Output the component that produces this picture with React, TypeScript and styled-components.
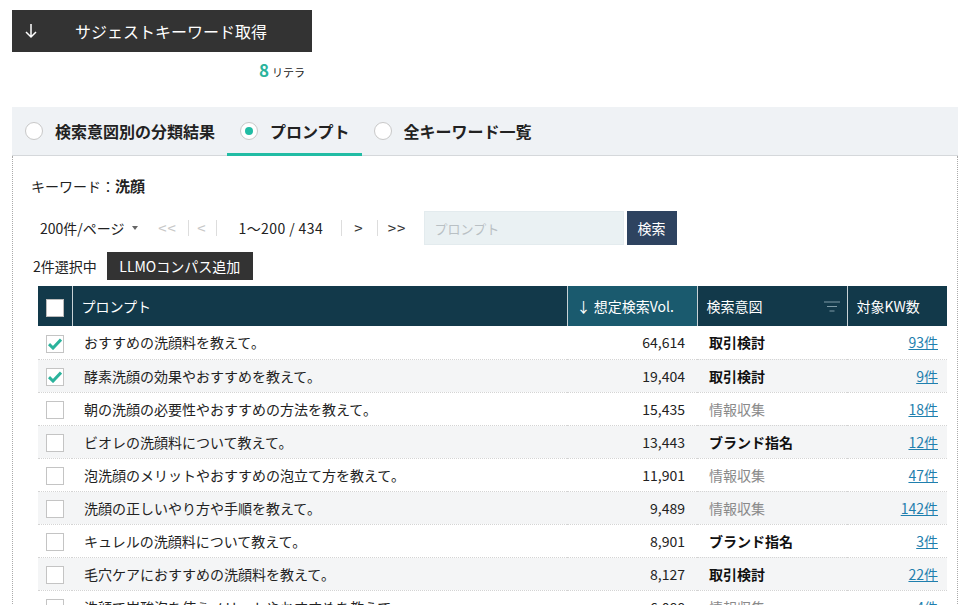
import React, { useState } from "react";
import styled, { createGlobalStyle } from "styled-components";

type Intent = "取引検討" | "情報収集" | "ブランド指名";

type Row = {
  prompt: string;
  vol: string;
  intent: Intent;
  count: string;
  checked?: boolean;
};

const rows: Row[] = [
  { prompt: "おすすめの洗顔料を教えて。", vol: "64,614", intent: "取引検討", count: "93件", checked: true },
  { prompt: "酵素洗顔の効果やおすすめを教えて。", vol: "19,404", intent: "取引検討", count: "9件", checked: true },
  { prompt: "朝の洗顔の必要性やおすすめの方法を教えて。", vol: "15,435", intent: "情報収集", count: "18件" },
  { prompt: "ビオレの洗顔料について教えて。", vol: "13,443", intent: "ブランド指名", count: "12件" },
  { prompt: "泡洗顔のメリットやおすすめの泡立て方を教えて。", vol: "11,901", intent: "情報収集", count: "47件" },
  { prompt: "洗顔の正しいやり方や手順を教えて。", vol: "9,489", intent: "情報収集", count: "142件" },
  { prompt: "キュレルの洗顔料について教えて。", vol: "8,901", intent: "ブランド指名", count: "3件" },
  { prompt: "毛穴ケアにおすすめの洗顔料を教えて。", vol: "8,127", intent: "取引検討", count: "22件" },
  { prompt: "洗顔で炭酸泡を使うメリットやおすすめを教えて。", vol: "6,088", intent: "情報収集", count: "4件" },
];

const GlobalStyle = createGlobalStyle`
  body {
    margin: 0;
    font-family: "Noto Sans CJK JP", "Noto Sans", sans-serif;
    color: #222;
    background: #fff;
  }
`;

const Page = styled.div`
  padding: 10px 11px 0 12px;
  height: 605px;
  overflow: hidden;
  box-sizing: border-box;
`;

const SuggestButton = styled.button`
  display: flex;
  align-items: center;
  width: 300px;
  height: 42px;
  background: #333;
  color: #fff;
  border: none;
  padding: 0 0 0 13px;
  font-family: inherit;
  font-size: 16px;
  cursor: pointer;

  & > span {
    margin-left: 38px;
  }
`;

const Credit = styled.div`
  width: 300px;
  text-align: right;
  padding-right: 7px;
  box-sizing: border-box;
  margin-top: 5px;
  font-size: 11px;
  height: 24px;

  & > b {
    color: #2bb39c;
    font-size: 17px;
    margin-right: 3px;
  }
`;

const Tabs = styled.div`
  margin-top: 26px;
  height: 48px;
  display: flex;
  align-items: stretch;
  background: #eff2f5;
  border-bottom: 1px solid #d5d8db;
  padding-left: 11px;
`;

const Tab = styled.div<{ $active?: boolean }>`
  display: flex;
  align-items: center;
  padding: 2px ${({ $active }) => ($active ? 12 : 12)}px 0 ${({ $active }) => ($active ? 13 : 2)}px;
  margin-right: ${({ $active }) => ($active ? 10 : 0)}px;
  font-size: 16px;
  font-weight: bold;
  color: #222;
  border-bottom: 3px solid ${({ $active }) => ($active ? "#21bca4" : "transparent")};
  margin-bottom: -1px;
  cursor: pointer;
`;

const Radio = styled.span<{ $on?: boolean }>`
  width: 16px;
  height: 16px;
  border-radius: 50%;
  border: 1px solid #c8c8c8;
  background: #fff;
  margin-right: 12px;
  display: inline-flex;
  align-items: center;
  justify-content: center;

  &::after {
    content: "";
    width: 8px;
    height: 8px;
    border-radius: 50%;
    background: ${({ $on }) => ($on ? "#21bca4" : "transparent")};
  }
`;

const Panel = styled.div`
  border-left: 1px dotted #aaa;
  border-right: 1px dotted #aaa;
  padding: 19px 10px 0 18px;
`;

const KeywordLine = styled.div`
  font-size: 14px;
  height: 22px;
  display: flex;
  align-items: baseline;

  & > b {
    font-size: 15px;
  }
`;

const Pager = styled.div`
  display: flex;
  align-items: center;
  margin-top: 14px;
  height: 34px;
  font-size: 14px;
`;

const PerPage = styled.span`
  margin-left: 9px;
  margin-right: 10px;
  display: flex;
  align-items: center;

  &::after {
    content: "";
    margin-left: 7px;
    border-left: 3.5px solid transparent;
    border-right: 3.5px solid transparent;
    border-top: 4px solid #666;
  }
`;

const PageLink = styled.span<{ $disabled?: boolean; $w: number; $last?: boolean }>`
  width: ${({ $w }) => $w}px;
  text-align: center;
  color: ${({ $disabled }) => ($disabled ? "#c8c8c8" : "#333")};
  border-right: 1px solid ${({ $last }) => ($last ? "transparent" : "#ddd")};
  line-height: 16px;
  font-size: 15px;
  letter-spacing: 1px;
`;

const Range = styled.span`
  width: 125px;
  box-sizing: border-box;
  padding-left: 22px;
  border-right: 1px solid #ddd;
  line-height: 16px;
  letter-spacing: 0.4px;
`;

const SearchInput = styled.input`
  margin-left: 6px;
  width: 200px;
  height: 34px;
  box-sizing: border-box;
  border: 1px solid #e3ebee;
  background: #eaf1f3;
  padding: 0 10px;
  font-family: inherit;
  font-size: 13px;

  &::placeholder {
    color: #b9c0c4;
  }
`;

const SearchButton = styled.button`
  margin-left: 3px;
  height: 34px;
  width: 50px;
  border: none;
  background: #2e4360;
  color: #fff;
  font-family: inherit;
  font-size: 14px;
`;

const SelectRow = styled.div`
  display: flex;
  align-items: center;
  margin-top: 6px;
  font-size: 14px;
  height: 29px;
  padding-left: 2px;
`;

const LlmoButton = styled.button`
  margin-left: 10px;
  height: 28px;
  width: 146px;
  border: none;
  background: #333;
  color: #fff;
  font-family: inherit;
  font-size: 14px;
`;

const Table = styled.table`
  margin: 6px 0 0 7px;
  width: 909px;
  border-collapse: collapse;
  font-size: 14px;
  table-layout: fixed;
`;

const Th = styled.th<{ $w: number; $sorted?: boolean }>`
  box-sizing: border-box;
  width: ${({ $w }) => $w}px;
  height: 40px;
  background: ${({ $sorted }) => ($sorted ? "#1a5a6e" : "#12394a")};
  color: #fff;
  font-weight: normal;
  text-align: left;
  padding: 0 9px;
  border-left: 1px solid #c8d2d6;
  font-size: 14px;
  position: relative;
  white-space: nowrap;

  &:first-child {
    border-left: none;
    padding: 0 0 0 8px;
  }
`;

const FilterIcon = styled.svg`
  position: absolute;
  right: 7px;
  top: 15px;
`;

const Tr = styled.tr<{ $odd: boolean }>`
  height: 33px;
  background: ${({ $odd }) => ($odd ? "#f4f5f6" : "#fff")};
  border-bottom: 1px dotted #d4d4d4;
`;

const Td = styled.td<{ $align?: "right" | "left" }>`
  padding: 0 12px;
  text-align: ${({ $align }) => $align || "left"};
  white-space: nowrap;
  overflow: hidden;

  &:first-child {
    padding: 0 0 0 8px;
  }

  &:last-child {
    padding-right: 9px;
  }
`;

const IntentCell = styled.td<{ $bold: boolean }>`
  padding: 0 12px;
  font-weight: ${({ $bold }) => ($bold ? "bold" : "normal")};
  color: ${({ $bold }) => ($bold ? "#111" : "#8a8a8a")};
  font-size: 14px;
  white-space: nowrap;
`;

const CountLink = styled.a`
  color: #1f7fae;
  text-decoration: underline;
  font-size: 14px;
`;

const Box = styled.span<{ $header?: boolean }>`
  display: inline-flex;
  width: 18px;
  height: 18px;
  box-sizing: border-box;
  border: 1px solid ${({ $header }) => ($header ? "#bbb" : "#c4c4c4")};
  background: #fff;
  vertical-align: middle;
  align-items: center;
  justify-content: center;
`;

const Check = () => (
  <svg width="14" height="12" viewBox="0 0 14 12">
    <path d="M1 6.2 L5 10 L13 1.5" fill="none" stroke="#2bb39c" strokeWidth="3" />
  </svg>
);

const App: React.FC = () => {
  const [tab, setTab] = useState(1);
  const tabs = ["検索意図別の分類結果", "プロンプト", "全キーワード一覧"];

  return (
    <Page>
      <GlobalStyle />
      <SuggestButton>
        <svg width="12" height="16" viewBox="0 0 12 16">
          <path d="M6 1 V14 M1 9 L6 14 L11 9" fill="none" stroke="#fff" strokeWidth="1.5" />
        </svg>
        <span>サジェストキーワード取得</span>
      </SuggestButton>
      <Credit>
        <b>8</b>リテラ
      </Credit>

      <Tabs>
        {tabs.map((t, i) => (
          <Tab key={t} $active={tab === i} onClick={() => setTab(i)}>
            <Radio $on={tab === i} />
            {t}
          </Tab>
        ))}
      </Tabs>

      <Panel>
        <KeywordLine>
          キーワード：<b>洗顔</b>
        </KeywordLine>
        <Pager>
          <PerPage>200件/ページ</PerPage>
          <PageLink $disabled $w={40}>&lt;&lt;</PageLink>
          <PageLink $disabled $w={27}>&lt;</PageLink>
          <Range>1～200 / 434</Range>
          <PageLink $w={35}>&gt;</PageLink>
          <PageLink $w={39} $last>&gt;&gt;</PageLink>
          <SearchInput placeholder="プロンプト" />
          <SearchButton>検索</SearchButton>
        </Pager>
        <SelectRow>
          <span>2件選択中</span>
          <LlmoButton>LLMOコンパス追加</LlmoButton>
        </SelectRow>

        <Table>
          <thead>
            <tr>
              <Th $w={34}>
                <Box $header />
              </Th>
              <Th $w={495}>プロンプト</Th>
              <Th $w={130} $sorted>↓ 想定検索Vol.</Th>
              <Th $w={150}>
                検索意図
                <FilterIcon width="16" height="11" viewBox="0 0 16 11">
                  <path d="M0 1 H16 M3 5.5 H13 M5.5 10 H10.5" stroke="#7f9ba6" strokeWidth="1" />
                </FilterIcon>
              </Th>
              <Th $w={100}>対象KW数</Th>
            </tr>
          </thead>
          <tbody>
            {rows.map((r, i) => (
              <Tr key={r.prompt} $odd={i % 2 === 1}>
                <Td>
                  <Box>{r.checked && <Check />}</Box>
                </Td>
                <Td>{r.prompt}</Td>
                <Td $align="right">{r.vol}</Td>
                <IntentCell $bold={r.intent !== "情報収集"}>{r.intent}</IntentCell>
                <Td $align="right">
                  <CountLink href="#">{r.count}</CountLink>
                </Td>
              </Tr>
            ))}
          </tbody>
        </Table>
      </Panel>
    </Page>
  );
};

export default App;
